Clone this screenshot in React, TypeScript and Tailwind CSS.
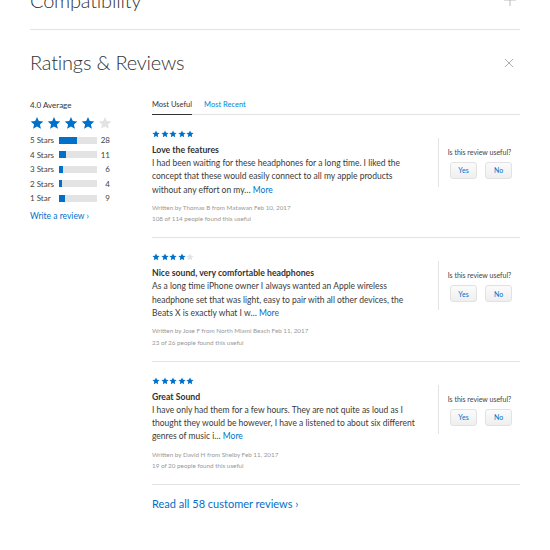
import React from "react";

interface Review {
    stars: number;
    title: string;
    lines: string[];
    author: string;
    useful: string;
}

const reviews: Review[] = [
    {
        stars: 5,
        title: "Love the features",
        lines: [
            "I had been waiting for these headphones for a long time. I liked the",
            "concept that these would easily connect to all my apple products",
            "without any effort on my…",
        ],
        author: "Written by Thomas B from Matawan Feb 10, 2017",
        useful: "108 of 114 people found this useful",
    },
    {
        stars: 4,
        title: "Nice sound, very comfortable headphones",
        lines: [
            "As a long time iPhone owner I always wanted an Apple wireless",
            "headphone set that was light, easy to pair with all other devices, the",
            "Beats X is exactly what I w…",
        ],
        author: "Written by Jose F from North Miami Beach Feb 11, 2017",
        useful: "23 of 26 people found this useful",
    },
    {
        stars: 5,
        title: "Great Sound",
        lines: [
            "I have only had them for a few hours. They are not quite as loud as I",
            "thought they would be however, I have a listened to about six different",
            "genres of music i…",
        ],
        author: "Written by David H from Shelby Feb 11, 2017",
        useful: "19 of 20 people found this useful",
    },
];

const bars = [
    { label: "5 Stars", count: 28 },
    { label: "4 Stars", count: 11 },
    { label: "3 Stars", count: 6 },
    { label: "2 Stars", count: 4 },
    { label: "1 Star", count: 9 },
];

function Star({ size, filled }: { size: number; filled: boolean }) {
    return (
        <svg width={size} height={size} viewBox="0 0 24 24">
            <path
                d="M12 1.5l3.1 7.1 7.7.7-5.8 5.1 1.7 7.6L12 18l-6.7 4 1.7-7.6-5.8-5.1 7.7-.7z"
                fill={filled ? "#0070c9" : "#e3e3e3"}
            />
        </svg>
    );
}

function Stars({ count, size, gap }: { count: number; size: number; gap: string }) {
    return (
        <div className={`flex items-center ${gap}`}>
            {[1, 2, 3, 4, 5].map((i) => (
                <Star key={i} size={size} filled={i <= count} />
            ))}
        </div>
    );
}

function ReviewItem({ review }: { review: Review }) {
    const last = review.lines.length - 1;
    return (
        <div className="flex border-b border-[#e3e3e3] pb-[12.5px]">
            <div className="flex-1 min-w-0 pr-[8px]">
                <div className="mt-[15px] h-[8px] flex items-center">
                    <Stars count={review.stars} size={8} gap="gap-[0.5px]" />
                </div>
                <div className="mt-[5px] text-[8.7px] leading-[14px] font-bold text-[#333]">
                    {review.title}
                </div>
                <div className="text-[8.5px] leading-[13.3px] text-[#3a3a3a]">
                    {review.lines.map((l, i) => (
                        <div key={i} className="whitespace-nowrap">
                            {l}
                            {i === last && <span className="text-[#0070c9]"> More</span>}
                        </div>
                    ))}
                </div>
                <div className="mt-[5px] text-[6.3px] leading-[11.5px] text-[#999]">
                    {review.author}
                </div>
                <div className="text-[6.3px] leading-[11.5px] text-[#999]">{review.useful}</div>
            </div>
            <div className="shrink-0 mt-[23px] h-[49px] w-[82px] border-l border-[#e3e3e3] flex flex-col items-center pt-[9px]">
                <div className="text-[7px] leading-[10px] text-[#444]">Is this review useful?</div>
                <div className="mt-[5px] flex gap-[8px] pl-[3px]">
                    <button className="w-[27px] h-[17px] rounded-[3px] border border-[#e2e2e2] bg-gradient-to-b from-[#fbfbfb] to-[#efefef] text-[7px] text-[#0070c9]">
                        Yes
                    </button>
                    <button className="w-[27px] h-[17px] rounded-[3px] border border-[#e2e2e2] bg-gradient-to-b from-[#fbfbfb] to-[#efefef] text-[7px] text-[#0070c9]">
                        No
                    </button>
                </div>
            </div>
        </div>
    );
}

export default function App() {
    return (
        <div className="w-[550px] h-[550px] overflow-hidden bg-white px-[30px] font-['Lato',sans-serif] text-[#333]">
            <div className="h-[30px] border-b border-[#e3e3e3] flex justify-between">
                <div className="-mt-[14px] text-[20px] leading-[28px] font-light text-[#333] tracking-[-0.2px]">
                    Compatibility
                </div>
                <svg width="12" height="12" viewBox="0 0 12 12" className="-mt-[6px] mr-[4px]">
                    <path d="M6 0v12M0 6h12" stroke="#aaa" strokeWidth="0.8" />
                </svg>
            </div>

            <div className="pt-[18px] flex justify-between items-center">
                <h2 className="text-[20px] leading-[28px] font-light text-[#333] tracking-[-0.2px]">
                    Ratings &amp; Reviews
                </h2>
                <svg width="10" height="10" viewBox="0 0 10 10" className="mr-[6px] mt-[2px]">
                    <path d="M1 1l8 8M9 1l-8 8" stroke="#999" strokeWidth="0.8" />
                </svg>
            </div>

            <div className="mt-[20px] flex">
                <div className="w-[122px] shrink-0">
                    <div className="text-[8px] leading-[18px] text-[#333]">4.0 Average</div>
                    <div className="mt-[2px] h-[14px]">
                        <Stars count={4} size={14} gap="gap-[3px]" />
                    </div>
                    <div className="mt-[3px]">
                        {bars.map((b) => (
                            <div key={b.label} className="h-[14.5px] flex items-center text-[8px] text-[#444]">
                                <div className="w-[29px]">{b.label}</div>
                                <div className="w-[38px] h-[7px] bg-[#e3e3e3]">
                                    <div className="h-full bg-[#0070c9]" style={{ width: `${(b.count / 58) * 38}px` }} />
                                </div>
                                <div className="w-[13px] text-right">{b.count}</div>
                            </div>
                        ))}
                    </div>
                    <div className="mt-[3.5px] text-[8.5px] leading-[14px] text-[#0070c9]">Write a review ›</div>
                </div>

                <div className="flex-1 min-w-0">
                    <div className="h-[19px] flex gap-[12px] border-b border-[#e3e3e3] text-[7.5px]">
                        <div className="h-[19px] flex items-center border-b border-[#333] text-[#333]">Most Useful</div>
                        <div className="h-[18px] flex items-center text-[#0088d6]">Most Recent</div>
                    </div>
                    {reviews.map((r) => (
                        <ReviewItem key={r.title} review={r} />
                    ))}
                    <div className="mt-[11px] text-[11px] leading-[16px] text-[#0070c9]">
                        Read all 58 customer reviews ›
                    </div>
                </div>
            </div>
        </div>
    );
}
